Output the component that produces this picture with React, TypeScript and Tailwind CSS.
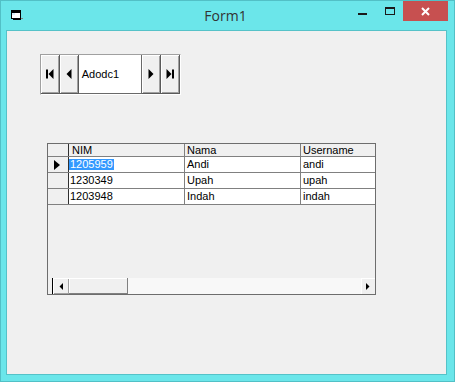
import React from "react";

const rows = [
  { nim: "1205959", nama: "Andi", user: "andi", sel: true },
  { nim: "1230349", nama: "Upah", user: "upah", sel: false },
  { nim: "1203948", nama: "Indah", user: "indah", sel: false },
];

function NavBtn({ children }: { children: React.ReactNode }) {
  return (
    <div className="w-[19px] h-full flex items-center justify-center bg-[#f0f0f0] border-r border-b border-[#5a5a5a] shadow-[inset_1px_1px_0_#ffffff,inset_-1px_-1px_0_#a0a0a0]">
      {children}
    </div>
  );
}

export default function App() {
  return (
    <div className="w-[458px] h-[383px] bg-white font-['Liberation_Sans',Arial,sans-serif]">
      <div className="w-[455px] h-[382px] bg-[#6be6ea] border border-[#52c0c6] flex flex-col">
        {/* Title bar */}
        <div className="h-[29px] flex items-start shrink-0">
          <div className="w-[101px] h-full flex items-start pl-[10px] pt-[9px]">
            <svg width="13" height="11" viewBox="0 0 13 11">
              <rect x="0.5" y="0.5" width="9" height="8" fill="#ffffff" stroke="#000" />
              <rect x="0" y="0" width="10" height="3" fill="#000" />
              <rect x="1" y="3" width="3" height="2" fill="#d8ecf8" />
              <rect x="10" y="8" width="2" height="1" fill="#808080" />
              <rect x="2" y="9" width="8" height="1" fill="#000" />
            </svg>
          </div>
          <div className="flex-1 h-full flex items-center justify-center text-[14px] text-[#333] font-['Open_Sans',sans-serif] pb-[1px]">
            Form1
          </div>
          <div className="flex items-start pr-[6px]">
            <div className="w-[27px] h-[20px] flex justify-center pt-[12px]">
              <div className="w-[9px] h-[2px] bg-[#1a1a1a]" />
            </div>
            <div className="w-[27px] h-[20px] flex justify-center pt-[6px]">
              <div className="w-[10px] h-[8px] border border-t-2 border-[#1a1a1a]" />
            </div>
            <div className="w-[45px] h-[20px] bg-[#c75050] flex items-center justify-center">
              <svg width="9" height="9" viewBox="0 0 9 9">
                <path d="M1 1 L8 8 M8 1 L1 8" stroke="#fff" strokeWidth="2" />
              </svg>
            </div>
          </div>
        </div>

        {/* Client area */}
        <div className="ml-[5px] w-[441px] h-[345px] border border-[#55c2c8] bg-[#f0f0f0] flex flex-col items-start pl-[33px] pt-[23px]">
          {/* Adodc control */}
          <div className="w-[141px] h-[41px] flex border-t border-l border-[#a0a0a0] border-b border-r border-b-white border-r-white text-[11px] text-black">
            <NavBtn>
              <svg width="8" height="10" viewBox="0 0 8 10">
                <rect x="0" y="0.5" width="2" height="9" fill="#000" />
                <path d="M7.5 0 L7.5 10 L2.5 5 Z" fill="#000" />
              </svg>
            </NavBtn>
            <NavBtn>
              <svg width="6" height="10" viewBox="0 0 6 10">
                <path d="M5.5 0 L5.5 10 L0.5 5 Z" fill="#000" />
              </svg>
            </NavBtn>
            <div className="w-[64px] h-full bg-white border-r border-b border-[#696969] flex items-center pl-[3px]">
              Adodc1
            </div>
            <NavBtn>
              <svg width="6" height="10" viewBox="0 0 6 10">
                <path d="M0.5 0 L0.5 10 L5.5 5 Z" fill="#000" />
              </svg>
            </NavBtn>
            <NavBtn>
              <svg width="8" height="10" viewBox="0 0 8 10">
                <path d="M0.5 0 L0.5 10 L5.5 5 Z" fill="#000" />
                <rect x="6" y="0.5" width="2" height="9" fill="#000" />
              </svg>
            </NavBtn>
          </div>

          {/* DataGrid */}
          <div className="ml-[7px] mt-[48px] w-[329px] h-[152px] border border-[#6d6d6d] bg-[#f0f0f0] flex flex-col overflow-hidden text-[11px] text-black">
            <div className="flex h-[13px] border-b border-[#808080] shrink-0 leading-[12px]">
              <div className="w-[21px] shrink-0 border-r border-[#303030]" />
              <div className="w-[116px] shrink-0 border-r border-[#808080] pl-[3px]">NIM</div>
              <div className="w-[116px] shrink-0 border-r border-[#808080] pl-[2px]">Nama</div>
              <div className="w-[116px] shrink-0 border-r border-[#808080] pl-[2px]">Username</div>
            </div>
            {rows.map((r) => (
              <div key={r.nim} className="flex h-[16px] border-b border-[#808080] shrink-0 leading-[15px]">
                <div className="w-[21px] shrink-0 border-r border-[#303030] flex items-center pl-[6px]">
                  {r.sel && (
                    <svg width="7" height="10" viewBox="0 0 7 10">
                      <path d="M0 0 L0 10 L6 5 Z" fill="#000" />
                    </svg>
                  )}
                </div>
                <div className="w-[116px] shrink-0 border-r border-[#808080] bg-white flex items-center">
                  {r.sel ? (
                    <span className="bg-[#3399ff] text-white leading-[11px] pl-[1px] pr-[1px]">{r.nim}</span>
                  ) : (
                    <span className="pl-[1px]">{r.nim}</span>
                  )}
                </div>
                <div className="w-[116px] shrink-0 border-r border-[#808080] bg-white pl-[2px]">{r.nama}</div>
                <div className="w-[116px] shrink-0 border-r border-[#808080] bg-white pl-[2px]">{r.user}</div>
              </div>
            ))}
            {/* Horizontal scrollbar */}
            <div className="mt-auto h-[16px] flex shrink-0 pl-[4px]">
              <div className="w-[17px] h-full border-l border-black bg-[#f0f0f0] shadow-[inset_1px_1px_0_#ffffff,inset_-1px_-1px_0_#a0a0a0] flex items-center justify-center">
                <svg width="4" height="7" viewBox="0 0 4 7">
                  <path d="M4 0 L4 7 L0.5 3.5 Z" fill="#000" />
                </svg>
              </div>
              <div className="w-[59px] h-full bg-[#f0f0f0] border-r border-b border-[#808080] shadow-[inset_1px_1px_0_#ffffff]" />
              <div className="flex-1 h-full bg-[#f8f8f8]" />
              <div className="w-[14px] h-full bg-[#f0f0f0] shadow-[inset_1px_1px_0_#ffffff] flex items-center justify-center">
                <svg width="4" height="7" viewBox="0 0 4 7">
                  <path d="M0 0 L0 7 L3.5 3.5 Z" fill="#000" />
                </svg>
              </div>
            </div>
          </div>
        </div>
      </div>
    </div>
  );
}
